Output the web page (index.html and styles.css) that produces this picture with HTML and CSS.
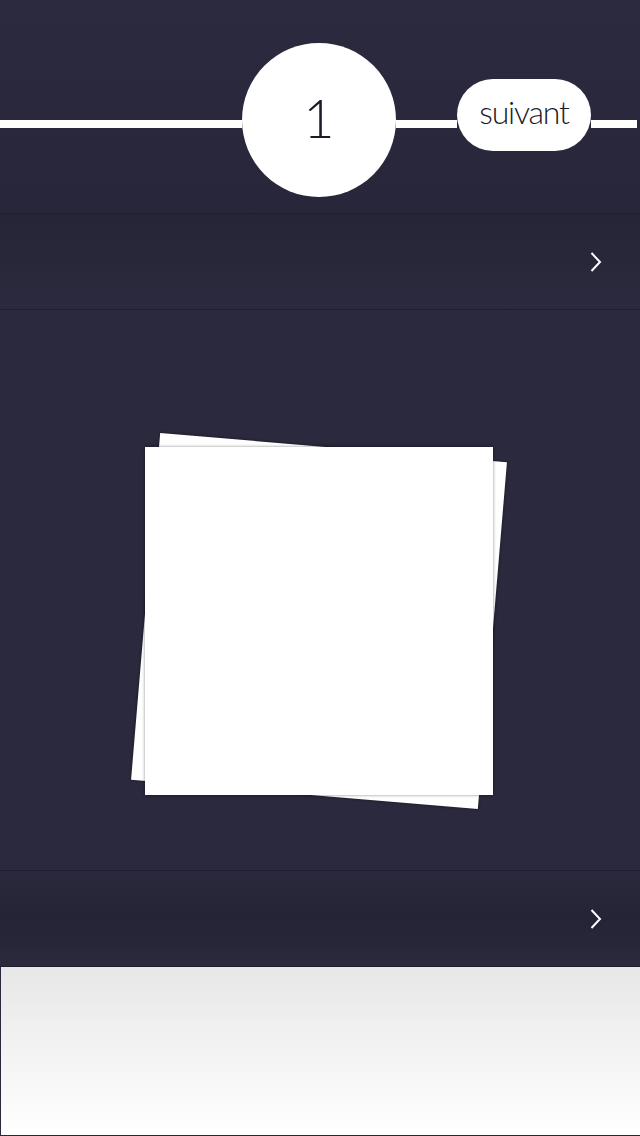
FILE: index.html
```html
<!DOCTYPE html>
<html lang="fr">
<head>
<meta charset="utf-8">
<title>Étape 1</title>
<link rel="stylesheet" href="styles.css">
</head>
<body>
<div class="screen">
  <header class="steps">
    <span class="seg seg-left"></span>
    <div class="step-circle">1</div>
    <span class="seg seg-mid"></span>
    <button class="next-pill">suivant</button>
    <span class="seg seg-right"></span>
  </header>
  <div class="row row-top">
    <svg class="chev" width="12" height="20" viewBox="0 0 12 20"><path d="M1.5 1 L10 10 L1.5 19" fill="none" stroke="#fff" stroke-width="2"/></svg>
  </div>
  <main class="stage">
    <div class="paper-stack">
      <div class="paper"></div>
    </div>
  </main>
  <div class="row row-bottom">
    <svg class="chev" width="12" height="20" viewBox="0 0 12 20"><path d="M1.5 1 L10 10 L1.5 19" fill="none" stroke="#fff" stroke-width="2"/></svg>
  </div>
  <footer class="tray"></footer>
</div>
</body>
</html>
```
FILE: styles.css
```css
html, body {
  margin: 0;
  padding: 0;
  background: #29283c;
}
.screen {
  width: 640px;
  height: 1136px;
  display: flex;
  flex-direction: column;
  font-family: "Lato", "Liberation Sans", sans-serif;
  background: #2a293d;
}
.steps {
  height: 213px;
  box-sizing: border-box;
  padding: 43px 3px 0 0;
  display: flex;
  align-items: flex-start;
  background: linear-gradient(#2b2a3e, #27263a);
}
.seg {
  height: 8px;
  margin-top: 77px;
  background: #fff;
}
.seg-left { width: 242px; }
.seg-mid { width: 61px; }
.seg-right { flex: 1; }
.step-circle {
  width: 154px;
  height: 154px;
  border-radius: 50%;
  background: #fff;
  display: flex;
  align-items: center;
  justify-content: center;
  padding-bottom: 4px;
  box-sizing: border-box;
  font-size: 54px;
  font-weight: 300;
  color: #1c1b28;
  line-height: 1;
}
.next-pill {
  margin-top: 36px;
  width: 134px;
  height: 72px;
  border: 0;
  border-radius: 36px;
  background: #fff;
  padding: 0 0 7px;
  font-family: "Lato", "Liberation Sans", sans-serif;
  font-size: 32px;
  font-weight: 300;
  letter-spacing: -1.2px;
  color: #1c1b28;
}
.row {
  height: 97px;
  box-sizing: border-box;
  border-top: 1px solid #1f1e2e;
  border-bottom: 1px solid #1f1e2e;
  display: flex;
  align-items: center;
  justify-content: flex-end;
  padding-right: 38px;
  background: linear-gradient(#262537, #2b2a3e);
}
.row-bottom {
  background: linear-gradient(#2a293d, #252436 50%, #2a293d);
}
.stage {
  height: 560px;
  box-sizing: border-box;
  padding: 137px 2px 0 0;
  display: flex;
  justify-content: center;
  align-items: flex-start;
  background: #2a293d;
}
.paper-stack {
  position: relative;
  width: 348px;
  height: 348px;
}
.paper-stack::before {
  content: "";
  position: absolute;
  inset: 0;
  background: #fff;
  transform: rotate(4.8deg);
  box-shadow: 0 0 3px rgba(0, 0, 0, 0.45);
}
.paper {
  position: relative;
  width: 348px;
  height: 348px;
  background: #fff;
  box-shadow: 0 0 3px rgba(0, 0, 0, 0.45);
}
.tray {
  flex: 1;
  box-sizing: border-box;
  border-left: 1px solid #29283c;
  border-bottom: 1px solid #29283c;
  background: linear-gradient(#e7e7e8, #ffffff);
}
```
